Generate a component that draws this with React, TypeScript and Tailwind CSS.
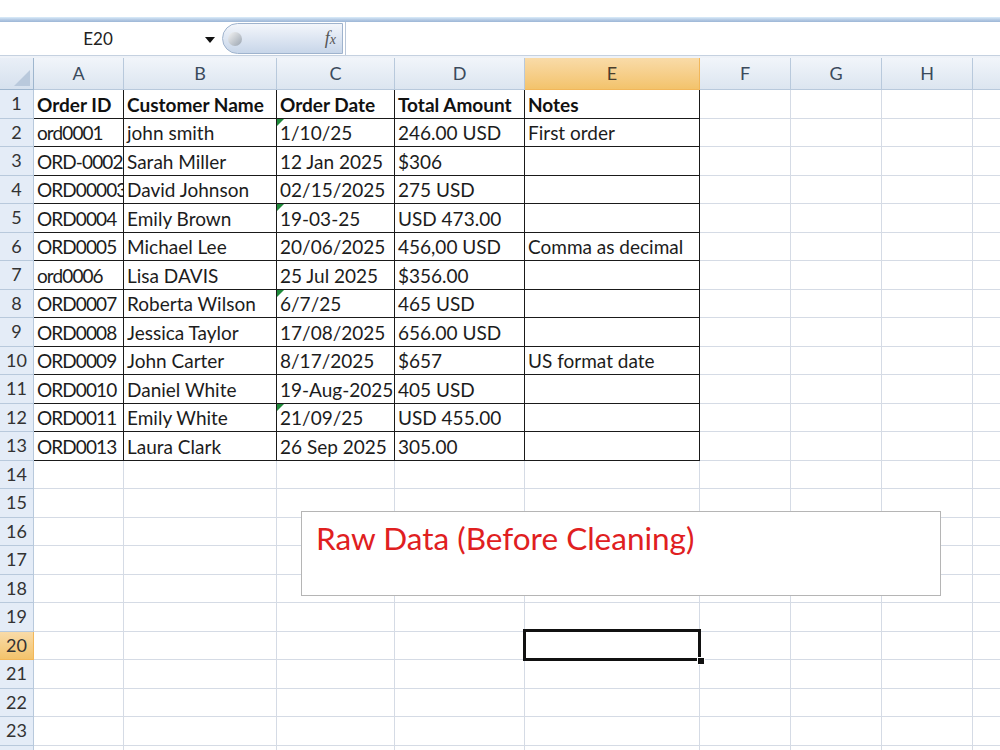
import React from "react";

const COLS = [
  { k: "A", w: 90 },
  { k: "B", w: 153 },
  { k: "C", w: 118 },
  { k: "D", w: 130 },
  { k: "E", w: 175 },
  { k: "F", w: 91 },
  { k: "G", w: 91 },
  { k: "H", w: 91 },
  { k: "I", w: 91 },
];

const DATA: string[][] = [
  ["Order ID", "Customer Name", "Order Date", "Total Amount", "Notes"],
  ["ord0001", "john smith", "1/10/25", "246.00 USD", "First order"],
  ["ORD-0002", "Sarah Miller", "12 Jan 2025", "$306", ""],
  ["ORD00003", "David Johnson", "02/15/2025", "275 USD", ""],
  ["ORD0004", "Emily Brown", "19-03-25", "USD 473.00", ""],
  ["ORD0005", "Michael Lee", "20/06/2025", "456,00 USD", "Comma as decimal"],
  ["ord0006", "Lisa DAVIS", "25 Jul 2025", "$356.00", ""],
  ["ORD0007", "Roberta Wilson", "6/7/25", "465 USD", ""],
  ["ORD0008", "Jessica Taylor", "17/08/2025", "656.00 USD", ""],
  ["ORD0009", "John Carter", "8/17/2025", "$657", "US format date"],
  ["ORD0010", "Daniel White", "19-Aug-2025", "405 USD", ""],
  ["ORD0011", "Emily White", "21/09/25", "USD 455.00", ""],
  ["ORD0013", "Laura Clark", "26 Sep 2025", "305.00", ""],
];

// rows where the date is stored as text (green flag in column C)
const FLAGGED = [2, 5, 8, 12];
const ACTIVE_ROW = 20;
const ACTIVE_COL = 4;

function FormulaBar() {
  return (
    <div className="flex h-[33px] items-stretch bg-white">
      <div className="relative flex w-[222px] items-center">
        <span className="w-[196px] text-center text-[17px] text-[#222]">E20</span>
        <svg width="10" height="6" viewBox="0 0 10 6" className="absolute left-[205px] top-[15px]">
          <path d="M0 0 L10 0 L5 6 Z" fill="#111" />
        </svg>
      </div>
      <div className="my-[1px] flex w-[121px] items-center justify-between rounded-l-full border border-[#9fb3cd] bg-gradient-to-b from-[#f3f6fb] to-[#c8d6e9] pl-[5px] pr-[6px]">
        <div className="h-[14px] w-[14px] rounded-full bg-gradient-to-br from-[#f5f5f5] to-[#9aa4b0]" />
        <span className="font-['Liberation_Serif',serif] text-[18px] italic text-[#555]">
          f<span className="text-[14px]">x</span>
        </span>
      </div>
      <div className="ml-[2px] flex-1 border-l border-[#b9c6d8] bg-white" />
    </div>
  );
}

function HeaderRow() {
  return (
    <div className="flex h-[32px] shrink-0">
      <div className="relative w-[34px] shrink-0 border-b border-r border-[#9eb6ce] bg-gradient-to-b from-[#e9eff7] to-[#d6e1ee]">
        <svg width="16" height="16" viewBox="0 0 16 16" className="absolute bottom-[3px] right-[3px]">
          <path d="M16 0 L16 16 L0 16 Z" fill="#b9c9dc" />
        </svg>
      </div>
      {COLS.map((c, i) =>
        i === ACTIVE_COL ? (
          <div
            key={c.k}
            style={{ width: c.w }}
            className="flex shrink-0 items-center justify-center border-b border-r border-[#f2b75a] bg-gradient-to-b from-[#f9dba8] to-[#f3c36b] text-[18px] text-[#4a3e2c]"
          >
            {c.k}
          </div>
        ) : (
          <div
            key={c.k}
            style={{ width: c.w }}
            className="flex shrink-0 items-center justify-center border-b border-r border-[#b8c9dc] bg-gradient-to-b from-[#f1f5fa] to-[#dce5f0] text-[18px] text-[#3b4a5c]"
          >
            {c.k}
          </div>
        )
      )}
    </div>
  );
}

function Row({ n }: { n: number }) {
  const data = DATA[n - 1];
  const inTable = n <= DATA.length;
  return (
    <div className="flex h-[28.5px] shrink-0">
      <div
        className={
          n === ACTIVE_ROW
            ? "flex w-[34px] shrink-0 items-center justify-center border-b border-r border-[#f2b75a] bg-gradient-to-b from-[#f9dba8] to-[#f3c36b] text-[18px] text-[#333]"
            : "flex w-[34px] shrink-0 items-center justify-center border-b border-r border-[#b8c9dc] bg-[#e4ecf7] text-[18px] text-[#333]"
        }
      >
        {n}
      </div>
      {COLS.map((c, i) => {
        const boxed = inTable && i < 5;
        return (
          <div
            key={c.k}
            style={{ width: c.w }}
            className={
              boxed
                ? "relative flex shrink-0 items-center overflow-hidden whitespace-nowrap border-b border-r border-[#1a1a1a] pl-[3px] pt-[2px]"
                : "relative flex shrink-0 items-center whitespace-nowrap border-b border-r border-[#d5dbe5] pl-[3px]"
            }
          >
            {boxed && (
              <span
                className={
                  (n === 1 ? "font-bold text-[#111]" : "text-[#1c1c1c]") +
                  (i === 0 && n > 1 ? " tracking-[-0.9px]" : "")
                }
              >
                {data[i]}
              </span>
            )}
            {boxed && i === 2 && FLAGGED.includes(n) && (
              <svg width="7" height="7" viewBox="0 0 7 7" className="absolute left-0 top-0">
                <path d="M0 0 L7 0 L0 7 Z" fill="#1f8a3b" />
              </svg>
            )}
            {n === ACTIVE_ROW && i === ACTIVE_COL && (
              <div className="absolute -left-[2px] -top-[3px] z-10 h-[32px] w-[178px] border-[3px] border-[#111]">
                <div className="absolute -bottom-[7px] -right-[7px] h-[8px] w-[8px] border border-white bg-[#111]" />
              </div>
            )}
          </div>
        );
      })}
    </div>
  );
}

export default function App() {
  const rows = Array.from({ length: 24 }, (_, i) => i + 1);
  return (
    <div className="flex h-[750px] w-[1000px] flex-col overflow-hidden bg-white font-['Lato',sans-serif] text-[19px]">
      <div className="h-[17px] shrink-0 bg-white" />
      <div className="h-[5px] shrink-0 bg-gradient-to-b from-[#dcedfa] via-[#b7cde6] to-[#9db6d6]" />
      <FormulaBar />
      <div className="h-[3px] shrink-0 border-t border-[#c5d1e0] bg-[#eef2f8]" />
      <div className="relative flex flex-1 flex-col overflow-hidden">
        <HeaderRow />
        {rows.map((n) => (
          <Row key={n} n={n} />
        ))}
        {/* floating text box over the sheet */}
        <div className="absolute left-[301px] top-[453px] z-20 h-[85px] w-[640px] border border-[#b5b5b5] bg-white px-[14px] pt-[3px] text-[31.5px] text-[#e0201f]">
          Raw Data (Before Cleaning)
        </div>
      </div>
    </div>
  );
}
